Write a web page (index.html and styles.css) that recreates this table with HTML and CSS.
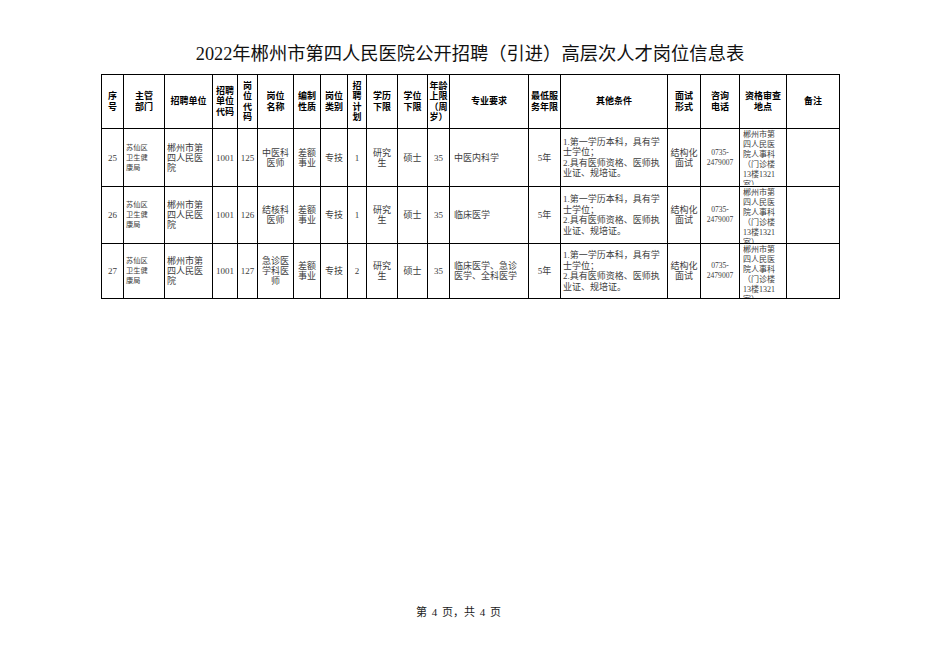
FILE: index.html
```html
<!DOCTYPE html>
<html lang="zh-CN">
<head>
<meta charset="utf-8">
<title>2022年郴州市第四人民医院公开招聘（引进）高层次人才岗位信息表</title>
<link rel="stylesheet" href="styles.css">
</head>
<body>
<div class="page">
  <h1 class="title">2022年郴州市第四人民医院公开招聘（引进）高层次人才岗位信息表</h1>
  <table class="jobs">
    <colgroup>
      <col class="c1"><col class="c2"><col class="c3"><col class="c4"><col class="c5">
      <col class="c6"><col class="c7"><col class="c8"><col class="c9"><col class="c10">
      <col class="c11"><col class="c12"><col class="c13"><col class="c14"><col class="c15">
      <col class="c16"><col class="c17"><col class="c18"><col class="c19">
    </colgroup>
    <thead>
      <tr class="head">
        <th>序<br>号</th>
        <th>主管<br>部门</th>
        <th>招聘单位</th>
        <th>招聘<br>单位<br>代码</th>
        <th>岗<br>位<br>代<br>码</th>
        <th>岗位<br>名称</th>
        <th>编制<br>性质</th>
        <th>岗位<br>类别</th>
        <th>招<br>聘<br>计<br>划</th>
        <th>学历<br>下限</th>
        <th>学位<br>下限</th>
        <th>年龄<br>上限<br>（周<br>岁）</th>
        <th>专业要求</th>
        <th>最低服<br>务年限</th>
        <th>其他条件</th>
        <th>面试<br>形式</th>
        <th>咨询<br>电话</th>
        <th>资格审查<br>地点</th>
        <th>备注</th>
      </tr>
    </thead>
    <tbody>
      <tr class="row r1">
        <td>25</td>
        <td class="left small">苏仙区<br>卫生健<br>康局</td>
        <td class="left">郴州市第<br>四人民医<br>院</td>
        <td>1001</td>
        <td>125</td>
        <td>中医科<br>医师</td>
        <td>差额<br>事业</td>
        <td>专技</td>
        <td>1</td>
        <td>研究<br>生</td>
        <td>硕士</td>
        <td>35</td>
        <td class="left major">中医内科学</td>
        <td>5年</td>
        <td class="left other">1.第一学历本科，具有学<br>士学位；<br>2.具有医师资格、医师执<br>业证、规培证。</td>
        <td>结构化<br>面试</td>
        <td class="phone">0735-<br>2479007</td>
        <td class="addr"><div class="clip">郴州市第<br>四人民医<br>院人事科<br>（门诊楼<br>13楼1321<br>室）</div></td>
        <td></td>
      </tr>
      <tr class="row r2">
        <td>26</td>
        <td class="left small">苏仙区<br>卫生健<br>康局</td>
        <td class="left">郴州市第<br>四人民医<br>院</td>
        <td>1001</td>
        <td>126</td>
        <td>结核科<br>医师</td>
        <td>差额<br>事业</td>
        <td>专技</td>
        <td>1</td>
        <td>研究<br>生</td>
        <td>硕士</td>
        <td>35</td>
        <td class="left major">临床医学</td>
        <td>5年</td>
        <td class="left other">1.第一学历本科，具有学<br>士学位；<br>2.具有医师资格、医师执<br>业证、规培证。</td>
        <td>结构化<br>面试</td>
        <td class="phone">0735-<br>2479007</td>
        <td class="addr"><div class="clip">郴州市第<br>四人民医<br>院人事科<br>（门诊楼<br>13楼1321<br>室）</div></td>
        <td></td>
      </tr>
      <tr class="row r3">
        <td>27</td>
        <td class="left small">苏仙区<br>卫生健<br>康局</td>
        <td class="left">郴州市第<br>四人民医<br>院</td>
        <td>1001</td>
        <td>127</td>
        <td>急诊医<br>学科医<br>师</td>
        <td>差额<br>事业</td>
        <td>专技</td>
        <td>2</td>
        <td>研究<br>生</td>
        <td>硕士</td>
        <td>35</td>
        <td class="left major">临床医学、急诊<br>医学、全科医学</td>
        <td>5年</td>
        <td class="left other">1.第一学历本科，具有学<br>士学位；<br>2.具有医师资格、医师执<br>业证、规培证。</td>
        <td>结构化<br>面试</td>
        <td class="phone">0735-<br>2479007</td>
        <td class="addr"><div class="clip">郴州市第<br>四人民医<br>院人事科<br>（门诊楼<br>13楼1321<br>室）</div></td>
        <td></td>
      </tr>
    </tbody>
  </table>
  <p class="footer">第 4 页，共 4 页</p>
</div>
</body>
</html>
```
FILE: styles.css
```css
html, body {
  margin: 0;
  padding: 0;
  background: #ffffff;
}

body {
  font-family: "Liberation Serif", "Noto Sans CJK SC", serif;
  color: #000;
}

.page {
  width: 738px;
  padding: 42px 0 0 101px;
}

.title {
  margin: 0 0 8px;
  font-size: 18.3px;
  line-height: 24px;
  font-weight: normal;
  text-align: center;
  color: #111;
  white-space: nowrap;
}

.jobs {
  border-collapse: collapse;
  table-layout: fixed;
  width: 738px;
}

.c1 { width: 22px; }
.c2 { width: 41px; }
.c3 { width: 48px; }
.c4 { width: 25px; }
.c5 { width: 20px; }
.c6 { width: 36px; }
.c7 { width: 27px; }
.c8 { width: 27px; }
.c9 { width: 19px; }
.c10 { width: 31px; }
.c11 { width: 30px; }
.c12 { width: 22px; }
.c13 { width: 79px; }
.c14 { width: 32px; }
.c15 { width: 107px; }
.c16 { width: 33px; }
.c17 { width: 39px; }
.c18 { width: 47px; }
.c19 { width: 53px; }

.jobs th,
.jobs td {
  border: 1px solid #000;
  padding: 0 1px;
  text-align: center;
  vertical-align: middle;
  overflow: hidden;
  white-space: nowrap;
}

.jobs th {
  font-family: "Noto Sans CJK SC", sans-serif;
  font-weight: 700;
  font-size: 9px;
  line-height: 10.5px;
  color: #000;
}

.head {
  height: 54px;
}

.jobs td {
  font-size: 9px;
  line-height: 10px;
  color: #3c3c3c;
}

.r1 { height: 58px; }
.r2 { height: 57px; }
.r3 { height: 55px; }

.jobs td.left {
  text-align: left;
  padding-left: 2px;
}

.jobs td.small {
  font-size: 7.2px;
}

.jobs td.major {
  padding-left: 4px;
}

.jobs td.other {
  line-height: 10.5px;
  padding-left: 2px;
}

.jobs td.phone {
  font-size: 7.6px;
}

.jobs td.addr {
  vertical-align: top;
  text-align: left;
  padding: 0 0 0 3px;
}

.clip {
  height: 56px;
  overflow: hidden;
  font-size: 8px;
  line-height: 10px;
  padding-top: 1px;
  box-sizing: border-box;
}

.r3 .clip {
  height: 54px;
}

.footer {
  margin: 306px 0 0;
  padding-left: 315px;
  font-size: 11px;
  line-height: 14px;
  word-spacing: 2px;
  color: #222;
}
```
